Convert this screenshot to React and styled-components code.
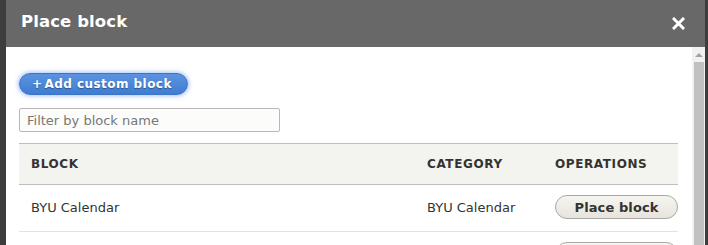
import React from 'react';
import styled, { createGlobalStyle } from 'styled-components';

const GlobalStyle = createGlobalStyle`
    html, body {
        margin: 0;
        padding: 0;
        background: #3d3d3d;
        font-family: "DejaVu Sans", "Liberation Sans", sans-serif;
        overflow: hidden;
    }
`;

//styles
const Page = styled.div`
    display: flex;
    height: 245px;
    padding-left: 6px;
`;

const Dialog = styled.div`
    width: 699px;
    height: 245px;
    display: flex;
    flex-direction: column;
    background: #fff;
    overflow: hidden;
`;

const TitleBar = styled.header`
    height: 47px;
    flex: 0 0 47px;
    box-sizing: border-box;
    display: flex;
    align-items: center;
    justify-content: space-between;
    padding: 0 20px 4px 15px;
    background: #686868;
`;

const Title = styled.h1`
    margin: 0;
    color: #fff;
    font-size: 16.5px;
    font-weight: bold;
    letter-spacing: 0.1px;
`;

const CloseButton = styled.button`
    border: 0;
    padding: 0;
    margin-top: 3px;
    background: none;
    display: flex;
    width: 13px;
    height: 13px;
    cursor: pointer;
`;

const Body = styled.div`
    flex: 1;
    display: flex;
    min-height: 0;
`;

const Content = styled.div`
    flex: 1;
    padding: 26px 14px 0 13px;
`;

const AddButton = styled.button`
    display: inline-flex;
    align-items: center;
    height: 22px;
    padding: 0 15px 0 12px;
    border: 1px solid #3d74c6;
    border-radius: 11px;
    background: linear-gradient(#5b93e0, #3f7dd1);
    box-shadow: 0 0 4px 1px rgba(90, 150, 240, 0.55);
    color: #fff;
    font-family: inherit;
    font-size: 12px;
    font-weight: bold;
    letter-spacing: 0.45px;
    text-shadow: 0 1px 1px rgba(0, 0, 0, 0.35);
`;

const Plus = styled.span`
    margin-right: 2px;
`;

const Filter = styled.input`
    display: block;
    box-sizing: border-box;
    margin-top: 13px;
    width: 261px;
    height: 24px;
    padding: 0 7px;
    border: 1px solid #b8b8b8;
    border-radius: 2px;
    background: #fcfcfa;
    font-family: inherit;
    font-size: 13px;
    color: #333;

    &::placeholder {
        color: #777;
    }
`;

const Table = styled.table`
    margin-top: 11px;
    width: 659px;
    border-collapse: collapse;
    table-layout: fixed;
`;

const HeadCell = styled.th`
    height: 40px;
    padding: 0 0 0 ${({ pad }) => pad}px;
    background: #f3f3ef;
    border-top: 1px solid #bfbfba;
    border-bottom: 1px solid #bfbfba;
    text-align: left;
    color: #333;
    font-size: 12px;
    font-weight: bold;
    letter-spacing: 0.6px;
    text-transform: uppercase;
`;

const Cell = styled.td`
    height: 44px;
    padding: 0 0 2px ${({ pad }) => pad}px;
    border-bottom: 1px solid #e3e2dd;
    color: #333;
    font-size: 13px;
    white-space: nowrap;
    overflow: hidden;
`;

const PlaceButton = styled.button`
    height: 24px;
    width: 123px;
    box-sizing: border-box;
    border: 1px solid #a8a8a4;
    border-radius: 12px;
    background: linear-gradient(#f6f5f0, #e6e4dc);
    color: #333;
    font-family: inherit;
    font-size: 13px;
    font-weight: bold;
    letter-spacing: 0.1px;
`;

const Scrollbar = styled.div`
    width: 14px;
    flex: 0 0 14px;
    background: #f1f1f1;
    display: flex;
    flex-direction: column;
    align-items: center;
`;

const Arrow = styled.div`
    margin-top: 6px;
    width: 0;
    height: 0;
    border-left: 4px solid transparent;
    border-right: 4px solid transparent;
    border-bottom: 4px solid #a3a3a3;
`;

const Thumb = styled.div`
    margin-top: 5px;
    width: 10px;
    flex: 1;
    background: #c1c1c1;
`;

const rows = [
    { name: 'BYU Calendar', category: 'BYU Calendar' },
    { name: 'BYU Feature Card', category: 'BYU Components' },
];

const App = () => {
    return (
        <Page>
            <GlobalStyle />
            <Dialog>
                <TitleBar>
                    <Title>Place block</Title>
                    <CloseButton aria-label="Close">
                        <svg width="13" height="13" viewBox="0 0 13 13">
                            <path d="M2 2 L11 11 M11 2 L2 11" stroke="#fff" strokeWidth="3" strokeLinecap="square" />
                        </svg>
                    </CloseButton>
                </TitleBar>
                <Body>
                    <Content>
                        <AddButton><Plus>+</Plus>Add custom block</AddButton>
                        <Filter placeholder="Filter by block name" />
                        <Table>
                            <colgroup>
                                <col style={{ width: 408 }} />
                                <col style={{ width: 128 }} />
                                <col style={{ width: 123 }} />
                            </colgroup>
                            <thead>
                                <tr>
                                    <HeadCell pad={12}>Block</HeadCell>
                                    <HeadCell pad={0}>Category</HeadCell>
                                    <HeadCell pad={0}>Operations</HeadCell>
                                </tr>
                            </thead>
                            <tbody>
                                {rows.map((row) => (
                                    <tr key={row.name}>
                                        <Cell pad={12}>{row.name}</Cell>
                                        <Cell pad={0}>{row.category}</Cell>
                                        <Cell pad={0}><PlaceButton>Place block</PlaceButton></Cell>
                                    </tr>
                                ))}
                            </tbody>
                        </Table>
                    </Content>
                    <Scrollbar>
                        <Arrow />
                        <Thumb />
                    </Scrollbar>
                </Body>
            </Dialog>
        </Page>
    );
};

export default App;
